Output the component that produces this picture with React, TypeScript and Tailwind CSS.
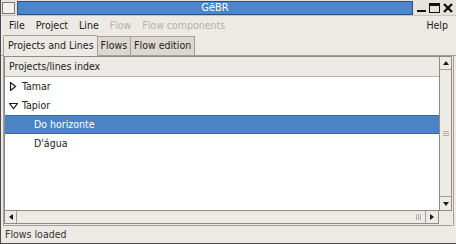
import React from 'react';

const font = { fontFamily: '"DejaVu Sans Condensed", "DejaVu Sans", sans-serif' };

const Arrow = ({ dir }: { dir: 'up' | 'down' | 'left' | 'right' }) => {
  const pts = {
    up: '1,6 4,2 7,6',
    down: '1,2 4,6 7,2',
    left: '6,1 2,4 6,7',
    right: '2,1 6,4 2,7',
  }[dir];
  return (
    <svg width="8" height="8" viewBox="0 0 8 8">
      <polygon points={pts} fill="#1a1a1a" />
    </svg>
  );
};

export default function App() {
  const rows = [
    { label: 'Tamar', level: 0, expander: 'closed' },
    { label: 'Tapior', level: 0, expander: 'open' },
    { label: 'Do horizonte', level: 1, selected: true },
    { label: "D'água", level: 1 },
  ];

  return (
    <div className="w-[456px] h-[244px] bg-[#edeae6] flex flex-col overflow-hidden text-[10.5px] text-[#222] border-l border-b border-[#4a4a4a]" style={font}>
      {/* Title bar */}
      <div className="h-[16px] flex items-center bg-[#e6e2dc] border-b border-[#c9c4bc]">
        <div className="w-[13px] h-[12px] ml-[1px] border border-[#7a7a7a] bg-[#f4f2ee]" />
        <div className="flex-1 h-[14px] ml-[2px] mr-[3px] bg-[#4b86cc] border border-[#2f4f7a] flex items-center justify-center text-white text-[11px] leading-none">
          GēBR
        </div>
        <div className="flex items-center gap-[2px] pr-[2px]">
          <div className="w-[11px] h-[12px] flex items-end justify-center pb-[2px]"><div className="w-[9px] h-[2px] bg-[#111]" /></div>
          <div className="w-[11px] h-[10px] border-[1.5px] border-[#111] border-t-[3px]" />
          <svg width="12" height="12" viewBox="0 0 12 12"><path d="M2 2 L10 10 M10 2 L2 10" stroke="#111" strokeWidth="2.4" /></svg>
        </div>
      </div>

      {/* Menu bar */}
      <div className="h-[19px] flex items-center pl-[8px] gap-[11px]">
        <span>File</span>
        <span>Project</span>
        <span>Line</span>
        <span className="text-[#b4b0aa]">Flow</span>
        <span className="text-[#b4b0aa]">Flow components</span>
        <span className="ml-auto pr-[8px]">Help</span>
      </div>

      {/* Tabs */}
      <div className="flex items-end px-[2px] h-[21px] border-b border-[#a39e96]">
        <div className="h-[21px] pl-[4px] pr-[3px] flex items-center bg-[#edeae6] border border-b-0 border-[#a39e96] rounded-t-[2px] -mb-px">Projects and Lines</div>
        <div className="h-[19px] px-[3px] flex items-center bg-[#dcd7cf] border border-b-0 border-l-0 border-[#a39e96]">Flows</div>
        <div className="h-[19px] px-[3px] flex items-center bg-[#dcd7cf] border border-b-0 border-l-0 border-[#a39e96]">Flow edition</div>
      </div>

      {/* Content */}
      <div className="flex-1 flex flex-col px-[2px] min-h-0">
        <div className="flex-1 flex flex-col border-x border-[#a39e96] pr-[1px] min-h-0">
          <div className="flex-1 flex min-h-0">
            {/* Tree view */}
            <div className="flex-1 flex flex-col bg-white border border-[#8f8a82] border-r-0 min-w-0">
              <div className="h-[20px] flex items-center px-[4px] bg-[#edeae6] border-b border-[#b8b3ab]">Projects/lines index</div>
              {rows.map((r) => (
                <div
                  key={r.label}
                  className={`h-[19px] flex items-center ${r.selected ? 'bg-[#4a84c6] text-white border-y border-[#3a6aa3]' : ''}`}
                >
                  <div className={`w-[14px] pl-[2px] flex justify-center ${r.level ? 'hidden' : ''}`}>
                    {r.expander === 'closed' && (
                      <svg width="8" height="9" viewBox="0 0 8 9"><polygon points="1.5,0.5 6.5,4.5 1.5,8.5" fill="none" stroke="#1a1a1a" strokeWidth="1.2" /></svg>
                    )}
                    {r.expander === 'open' && (
                      <svg width="9" height="8" viewBox="0 0 9 8"><polygon points="0.5,1.5 8.5,1.5 4.5,6.5" fill="none" stroke="#1a1a1a" strokeWidth="1.2" /></svg>
                    )}
                  </div>
                  <span className={r.level ? 'pl-[29px]' : 'pl-[3px]'}>{r.label}</span>
                </div>
              ))}
            </div>
            {/* Vertical scrollbar */}
            <div className="w-[13px] flex flex-col bg-[#dcd8d1] border border-[#8f8a82]">
              <div className="h-[13px] flex items-center justify-center bg-[#eeebe6] border-b border-[#a39e96]"><Arrow dir="up" /></div>
              <div className="flex-1 flex items-center justify-center bg-[#eeebe6] border-b border-[#a39e96]">
                <div className="w-[6px] flex flex-col gap-[1px]">
                  <div className="h-px bg-[#b2ada5]" /><div className="h-px bg-[#b2ada5]" /><div className="h-px bg-[#b2ada5]" />
                </div>
              </div>
              <div className="h-[13px] flex items-center justify-center bg-[#eeebe6]"><Arrow dir="down" /></div>
            </div>
          </div>
          {/* Horizontal scrollbar */}
          <div className="h-[13px] flex mr-[13px] bg-[#dcd8d1] border border-[#8f8a82] border-t-0">
            <div className="w-[12px] flex items-center justify-center bg-[#eeebe6] border-r border-[#a39e96]"><Arrow dir="left" /></div>
            <div className="flex-1 flex items-center justify-end pr-[4px] bg-[#eeebe6] border-r border-[#a39e96]">
              <div className="flex gap-[1px] h-[6px]">
                <div className="w-px bg-[#b2ada5]" /><div className="w-px bg-[#b2ada5]" /><div className="w-px bg-[#b2ada5]" />
              </div>
            </div>
            <div className="w-[12px] flex items-center justify-center bg-[#eeebe6]"><Arrow dir="right" /></div>
          </div>
          <div className="h-[2px] border-b border-[#a39e96]" />
        </div>
      </div>

      {/* Status bar */}
      <div className="h-[17px] flex items-center px-[4px] text-[#333]">
        <span>Flows loaded</span>
      </div>
    </div>
  );
}
